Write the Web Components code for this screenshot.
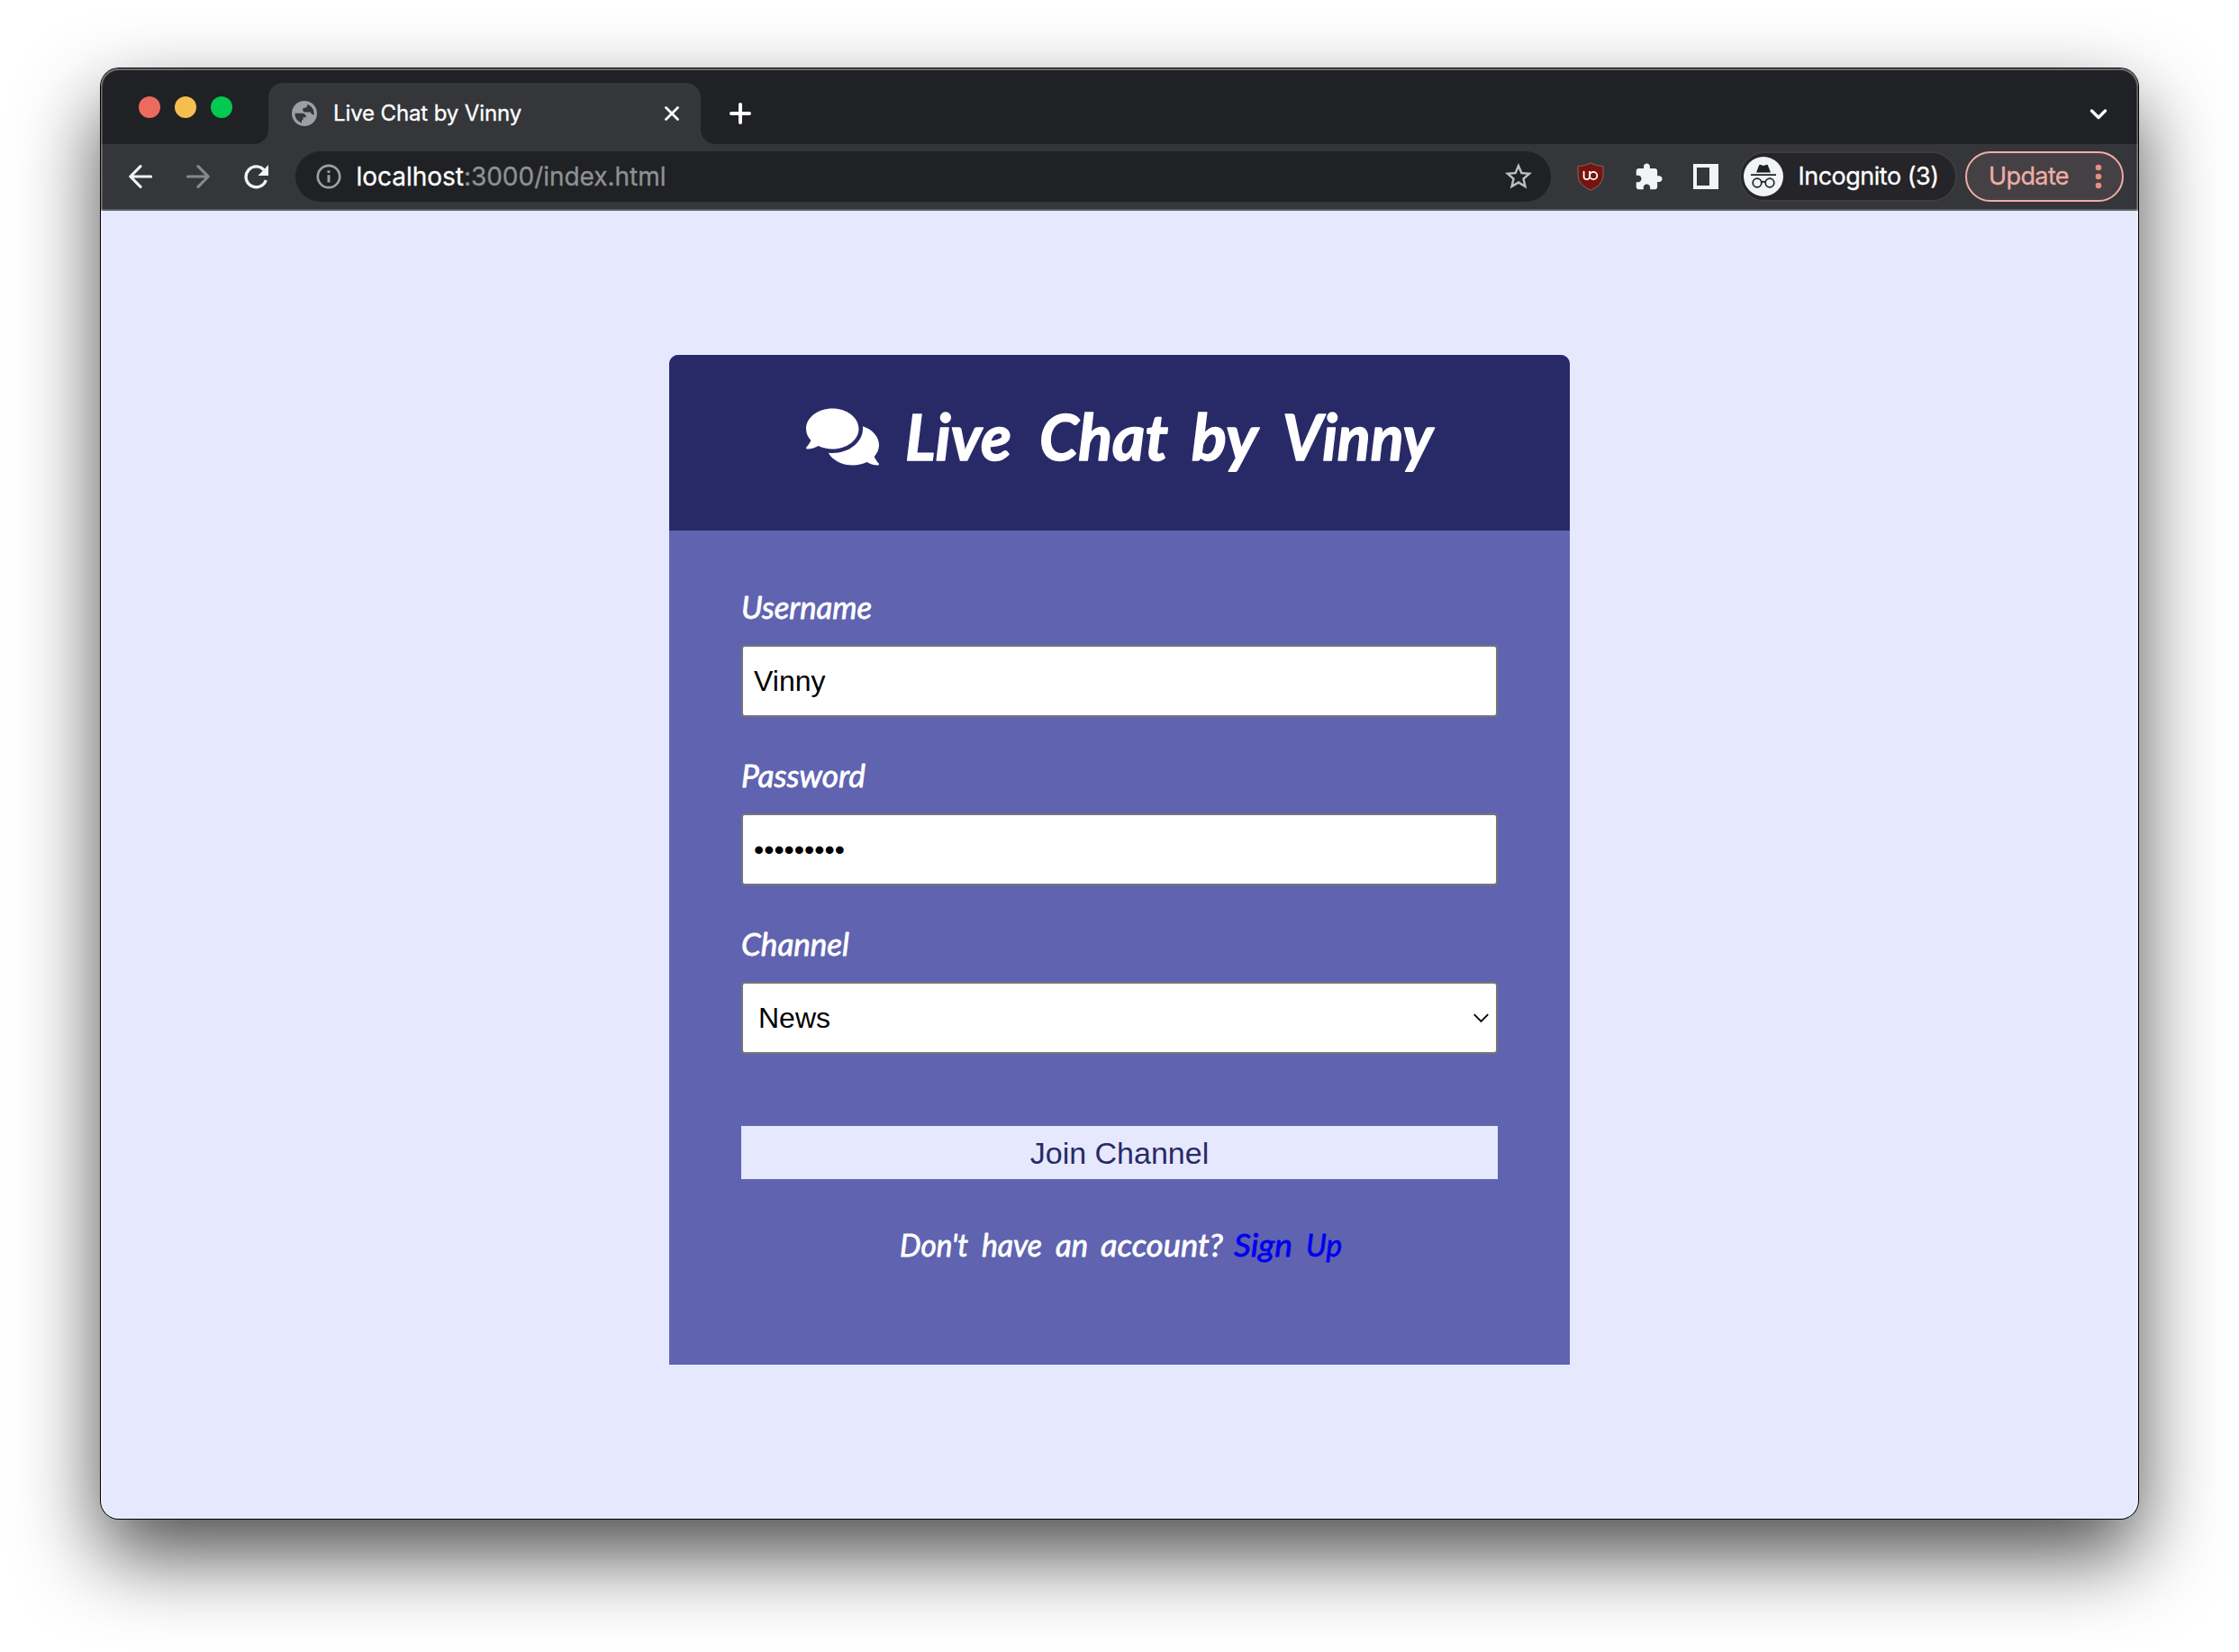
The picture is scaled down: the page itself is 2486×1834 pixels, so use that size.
<!DOCTYPE html>
<html lang="en">
<head>
<meta charset="utf-8">
<title>Live Chat by Vinny</title>
<style>
html, body { margin: 0; height: 100%; background: #fff; overflow: hidden; }
body { font-family: Inter, "Liberation Sans", sans-serif; }
</style>
</head>
<body>
<browser-window>
  <tab-strip slot="chrome">Live Chat by Vinny</tab-strip>
  <tool-bar slot="chrome"></tool-bar>
  <login-card></login-card>
</browser-window>
<script>
const define = (name, html, setup) => {
  const tpl = document.createElement('template');
  tpl.innerHTML = html;
  customElements.define(name, class extends HTMLElement {
    connectedCallback() {
      if (this.shadowRoot) return;
      this.attachShadow({ mode: 'open' }).append(tpl.content.cloneNode(true));
      if (setup) setup(this, this.shadowRoot);
    }
  });
};

// Spreads a line of text over a given width through its letter spacing.
define('fit-text', `<style>:host{display:inline-block;white-space:nowrap}span{display:inline-block}</style><span><slot></slot></span>`, (el, root) => {
  const span = root.querySelector('span');
  span.style.letterSpacing = '0';
  const w = span.getBoundingClientRect().width;
  span.style.letterSpacing = (+el.getAttribute('width') - w) / el.textContent.length + 'px';
});

// Handwritten words on one baseline. words = "text,start,width[,link]|..."
define('hand-text', `<style>
:host{display:block}
svg{display:block;overflow:visible}
text{font-family:Lato,"Open Sans",sans-serif;font-style:italic;fill:currentColor;stroke:currentColor;stroke-linejoin:round}
</style><svg><text></text></svg>`, (el, root) => {
  const svg = root.querySelector('svg'), text = root.querySelector('text');
  const g = n => el.getAttribute(n);
  svg.setAttribute('width', g('w'));
  svg.setAttribute('height', g('h'));
  text.setAttribute('y', g('base'));
  text.style.fontSize = g('size') + 'px';
  text.style.fontWeight = g('weight') || 400;
  text.style.strokeWidth = g('stroke') || 0;
  g('words').split('|').forEach((item, i) => {
    const [word, x, len, link] = item.split(',');
    if (i) text.append(' ');
    const t = document.createElementNS('http://www.w3.org/2000/svg', 'tspan');
    t.setAttribute('x', x);
    t.setAttribute('textLength', len);
    t.setAttribute('lengthAdjust', 'spacingAndGlyphs');
    t.textContent = word;
    if (link) { t.style.fill = '#0000ee'; t.style.stroke = '#0000ee'; }
    text.append(t);
  });
});

define('browser-window', `<style>
:host{display:block;box-sizing:border-box;height:100vh;padding:76px 112px 148px}
.win{position:relative;display:flex;flex-direction:column;width:2262px;height:1610px;border-radius:20px;background:#e6e9fd;box-shadow:0 0 0 1px #000,0 40px 90px rgba(0,0,0,.7)}
.clip{display:flex;flex-direction:column;height:100%;border-radius:20px;overflow:hidden}
main{flex:1;display:flex;justify-content:center;align-items:flex-start;padding-top:160px}
.rim{position:absolute;inset:0;border-radius:20px;pointer-events:none;box-shadow:inset 0 0 0 2px rgba(255,255,255,.2),inset 0 1px 0 1px rgba(255,255,255,.17)}
</style><div class="win"><div class="clip"><slot name="chrome"></slot><main><slot></slot></main></div><div class="rim"></div></div>`);

define('tab-strip', `<style>
:host{display:flex;align-items:flex-end;height:84px;background:#202124;color:#fff;flex:none}
.lights{display:flex;gap:16px;width:186px;box-sizing:border-box;padding-left:42px;height:53px}
.lights i{width:24px;height:24px;border-radius:50%}
.tab{position:relative;display:flex;align-items:center;width:480px;height:68px;box-sizing:border-box;padding:0 24px 0 26px;background:#35363a;border-radius:16px 16px 0 0;font-size:24px;line-height:30px;-webkit-text-stroke:.3px #fff}
.tab::before,.tab::after{content:"";position:absolute;bottom:0;width:16px;height:16px}
.tab::before{left:-16px;background:radial-gradient(circle at 0 0,transparent 15.5px,#35363a 16.3px)}
.tab::after{right:-16px;background:radial-gradient(circle at 100% 0,transparent 15.5px,#35363a 16.3px)}
.name{margin-left:18px;flex:1}
svg{display:block;fill:none;stroke:#fff;stroke-linecap:round;stroke-linejoin:round}
.plus{padding:0 0 22px 32px}
.down{margin-left:auto;padding:0 34px 26px 0}
</style>
<div class="lights"><i style="background:#ec6a5e"></i><i style="background:#f4bf4f"></i><i style="background:#00ca4f"></i></div>
<div class="tab">
<svg width="28" height="28" viewBox="0 0 28 28"><circle cx="14" cy="14" r="14" fill="#9aa0a6" stroke="none"/><path fill="#35363a" stroke="none" d="M3.4 13.8H11.2C14 13.8 15.8 15 15.9 18.3H12.6V21.3H11V24.3C6.3 23 3.4 19 3.4 13.8ZM17.3 3.9C21.7 5.2 24.6 9.1 24.6 13.8L24.4 15.8C22 14.8 21.5 14.2 20.8 12.5H15.3C13.4 12.4 12.3 11.5 12.2 9.8C12.2 8.2 13.2 7.4 15 7.4H16.4Z"/></svg>
<div class="name"></div>
<svg width="16" height="16"><path stroke-width="2.8" d="M1.5 1.5l13 13M14.5 1.5l-13 13"/></svg></div>
<div class="plus"><svg width="24" height="24"><path stroke-width="4" d="M12 2v20M2 12h20"/></svg></div>
<div class="down"><svg width="20" height="14"><path stroke-width="3.4" d="M2.5 3l7.5 7.5L17.5 3"/></svg></div>`, (el, root) => {
  const fit = document.createElement('fit-text');
  fit.setAttribute('width', 209);
  fit.textContent = el.textContent.trim();
  root.querySelector('.name').append(fit);
});

define('tool-bar', `<style>
:host{display:flex;align-items:center;height:74px;box-sizing:border-box;padding:0 16px 0 31px;background:#35363a;border-bottom:2px solid #5f6063;color:#fff;font-size:28px;line-height:34px;flex:none}
svg{display:block;flex:none}
.line{fill:none;stroke:#f1f3f4;stroke-width:3.2;stroke-linecap:round;stroke-linejoin:round}
.omni{display:flex;align-items:center;width:1394px;height:56px;box-sizing:border-box;margin-left:30px;padding:0 21px 0 22.5px;border-radius:28px;background:#202124}
.url{flex:1;margin-left:17px;color:#8f9194;-webkit-text-stroke:.3px}
.url b{font-weight:400;color:#fff}
.inc{display:flex;align-items:center;width:242px;height:56px;box-sizing:border-box;margin-left:23px;padding-left:3px;border:2px solid #3c3c41;border-radius:28px;background:#242429;font-size:27px}
.inc fit-text{margin-left:17px;-webkit-text-stroke:.3px}
.upd{display:flex;align-items:center;justify-content:space-between;width:176px;height:56px;box-sizing:border-box;margin-left:9px;padding:0 22px 0 24.5px;border:2px solid #f0aea8;border-radius:28px;background:#454043;color:#eeaea8;font-size:27px;-webkit-text-stroke:.3px}
</style>
<svg class="line" width="26" height="28"><path d="M24.5 14H2M13 2.6L1.8 14 13 25.4"/></svg>
<svg class="line" style="stroke:#86888b;margin-left:38px" width="26" height="28"><path d="M1.5 14H24M13 2.6L24.2 14 13 25.4"/></svg>
<svg style="margin-left:38px" width="27" height="27"><path fill="none" stroke="#f1f3f4" stroke-width="3.4" d="M22.5 6.3A11.4 11.4 0 1 0 24.3 17"/><path fill="#f1f3f4" d="M27 0V12H15.5Z"/></svg>
<div class="omni">
<svg width="28" height="28"><circle cx="14" cy="14" r="12.2" fill="none" stroke="#9aa0a6" stroke-width="2.7"/><path fill="#9aa0a6" d="M12.5 7.2h3V10h-3zM12.5 12.2h3v8.3h-3z"/></svg>
<div class="url"><fit-text width="344"><b>localhost</b>:3000/index.html</fit-text></div>
<svg width="36" height="36" viewBox="0 0 24 24" style="margin-right:-3px"><path fill="#bdbfc2" d="M22 9.24l-7.19-.62L12 2 9.19 8.63 2 9.24l5.46 4.73L5.82 21 12 17.27 18.18 21l-1.63-7.03L22 9.24zM12 15.4l-3.76 2.27 1-4.28-3.32-2.88 4.38-.38L12 6.1l1.71 4.04 4.38.38-3.32 2.88 1 4.28L12 15.4z"/></svg>
</div>
<svg style="margin-left:29px" width="30" height="32"><path fill="#77140f" stroke="#7d6a6b" stroke-width="1" d="M15 .8C11 3.4 6 4.2 1 4.4V13.5C1 22.5 6.5 27.4 15 31.2 23.5 27.4 29 22.5 29 13.5V4.4C24 4.2 19 3.4 15 .8Z"/><path fill="none" stroke="#fff" stroke-width="1.8" stroke-linecap="round" d="M7.6 10.6V16.2A3 3 0 0 0 10.6 19.2H11A3 3 0 0 0 14 16.2V10.6"/><circle cx="18.2" cy="15" r="4.1" fill="none" stroke="#fff" stroke-width="1.8"/></svg>
<svg style="margin-left:32.5px" width="33" height="33" viewBox="0 0 24 24"><path fill="#f1f3f4" d="M20.5 11H19V7c0-1.1-.9-2-2-2h-4V3.5C13 2.12 11.88 1 10.5 1S8 2.12 8 3.5V5H4c-1.1 0-1.99.9-1.99 2v3.8H3.5c1.49 0 2.7 1.21 2.7 2.7s-1.21 2.7-2.7 2.7H2V20c0 1.1.9 2 2 2h3.8v-1.5c0-1.49 1.21-2.7 2.7-2.7 1.49 0 2.7 1.21 2.7 2.7V22H17c1.1 0 2-.9 2-2v-4h1.5c1.38 0 2.5-1.12 2.5-2.5S21.88 11 20.5 11z"/></svg>
<svg style="margin-left:33px" width="28" height="28"><path fill="#f1f3f4" fill-rule="evenodd" d="M0 0H28V28H0ZM4 4V24H18V4Z"/></svg>
<div class="inc"><svg width="44" height="44"><circle cx="22" cy="22" r="22" fill="#f1f3f4"/><path fill="#202124" d="M14 17.5L17.2 9.2Q17.5 8.6 18.3 8.8L22 9.9 25.7 8.8Q26.5 8.6 26.8 9.2L30 17.5ZM8 19.2H36V21H8Z"/><g fill="none" stroke="#202124" stroke-width="1.7"><circle cx="15" cy="29" r="4.8"/><circle cx="29" cy="29" r="4.8"/><path d="M19.7 28.5Q22 26.8 24.3 28.5"/></g></svg><fit-text width="156">Incognito (3)</fit-text></div>
<div class="upd"><fit-text width="89">Update</fit-text><svg width="8" height="28" fill="#e58e84"><circle cx="4" cy="4" r="3.3"/><circle cx="4" cy="14" r="3.3"/><circle cx="4" cy="24" r="3.3"/></svg></div>`);

define('form-field', `<style>
:host{display:block;margin-bottom:38px}
.box{display:flex;align-items:center;justify-content:space-between;height:80px;box-sizing:border-box;padding:0 8px 0 12px;border:2px solid #767676;border-radius:4px;background:#fff;color:#000;font:32px/38px "Liberation Sans",Arial,sans-serif}
:host([select]) .box{padding-left:17px}
svg{display:none}
:host([select]) svg{display:block}
</style><slot name="label"></slot><div class="box"><span><slot></slot></span><svg width="17" height="11"><path fill="none" stroke="#000" stroke-width="1.9" d="M.8 1.2l7.7 7.8 7.7-7.8"/></svg></div>`);

define('login-card', `<style>
:host{display:block;width:1000px;height:1121px;border-radius:10px 10px 0 0;overflow:hidden;background:#6063b0;color:#fff}
header{display:flex;height:195px;background:#282a68;box-sizing:border-box;padding:54.5px 0 0 152px}
.title{margin-top:-54.5px}
.body{padding:47px 80px 0}
button{display:block;width:100%;height:59px;margin:80px 0 0;padding:0;border:0;border-radius:0;background:#e6e9fd;color:#282a68;font:34px/40px "Liberation Sans",Arial,sans-serif}
form-field:last-of-type{margin-bottom:0}
</style>
<header>
<svg width="81" height="72" viewBox="0 0 576 512" fill="#fff"><path d="M416 192c0-88.4-93.1-160-208-160S0 103.6 0 192c0 34.3 14.1 65.9 38 92-13.4 30.2-35.5 54.2-35.8 54.5-2.2 2.3-2.8 5.7-1.5 8.7S4.8 352 8 352c36.6 0 66.9-12.3 88.7-25 32.2 15.7 70.3 25 111.3 25 114.9 0 208-71.6 208-160zm122 220c23.9-26 38-57.7 38-92 0-66.9-53.5-124.2-129.3-148.1.9 6.6 1.3 13.3 1.3 20.1 0 105.9-107.7 192-240 192-10.8 0-21.3-.8-31.7-1.9C207.8 439.6 281.8 480 368 480c41 0 79.1-9.2 111.3-25 21.8 12.7 52.1 25 88.7 25 3.2 0 6.1-1.9 7.3-4.8 1.3-2.9.7-6.3-1.5-8.7-.3-.3-22.4-24.2-35.8-54.5z"/></svg>
<hand-text class="title" w="640" h="195" base="116.5" size="70" weight="700" stroke="1.5" words="Live,29,118|Chat,178,143|by,347,72|Vinny,448,167"></hand-text>
</header>
<div class="body">
<form-field><hand-text slot="label" w="834" h="80" base="51" size="35" stroke=".8" words="Username,0,145"></hand-text>Vinny</form-field>
<form-field><hand-text slot="label" w="834" h="69" base="39.5" size="35" stroke=".8" words="Password,0,138"></hand-text>•••••••••</form-field>
<form-field select><hand-text slot="label" w="834" h="69" base="39.5" size="35" stroke=".8" words="Channel,0,120"></hand-text>News</form-field>
<button type="button">Join Channel</button>
<hand-text w="834" h="140" base="86" size="35" stroke=".8" words="Don't,176,76|have,267,67|an,349,36|account?,399,136|Sign,547,65,1|Up,627,40,1"></hand-text>
</div>`);
</script>
</body>
</html>
